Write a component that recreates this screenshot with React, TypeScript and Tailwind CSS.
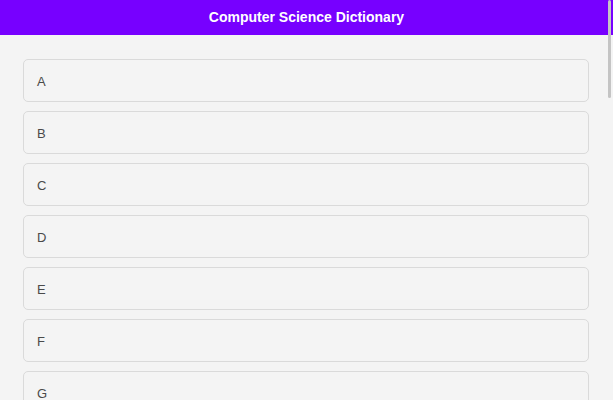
const letters = "ABCDEFGHIJKLMNOPQRSTUVWXYZ".split("");

export default function App() {
  return (
    <div className="relative h-screen overflow-hidden bg-[#f4f4f4] [font-family:'Liberation_Sans',Arial,sans-serif]">
      <header className="flex h-[35px] items-center justify-center bg-[#7700ff]">
        <h1 className="text-[14px] font-bold text-white">Computer Science Dictionary</h1>
      </header>
      <main className="flex flex-col gap-[9px] pt-[24px] pr-[24px] pb-[24px] pl-[23px]">
        {letters.map((letter) => (
          <div
            key={letter}
            className="flex h-[43px] items-center rounded-[5px] border border-[#dadada] bg-[#f4f4f4] px-[13px] pt-[2px] text-[13px] text-[#4a4a4a]"
          >
            {letter}
          </div>
        ))}
      </main>
      {/* overlay scroll thumb */}
      <div className="absolute top-0 right-[2px] h-[98px] w-[3px] rounded-full bg-[#c4c4c4]" />
    </div>
  );
}
